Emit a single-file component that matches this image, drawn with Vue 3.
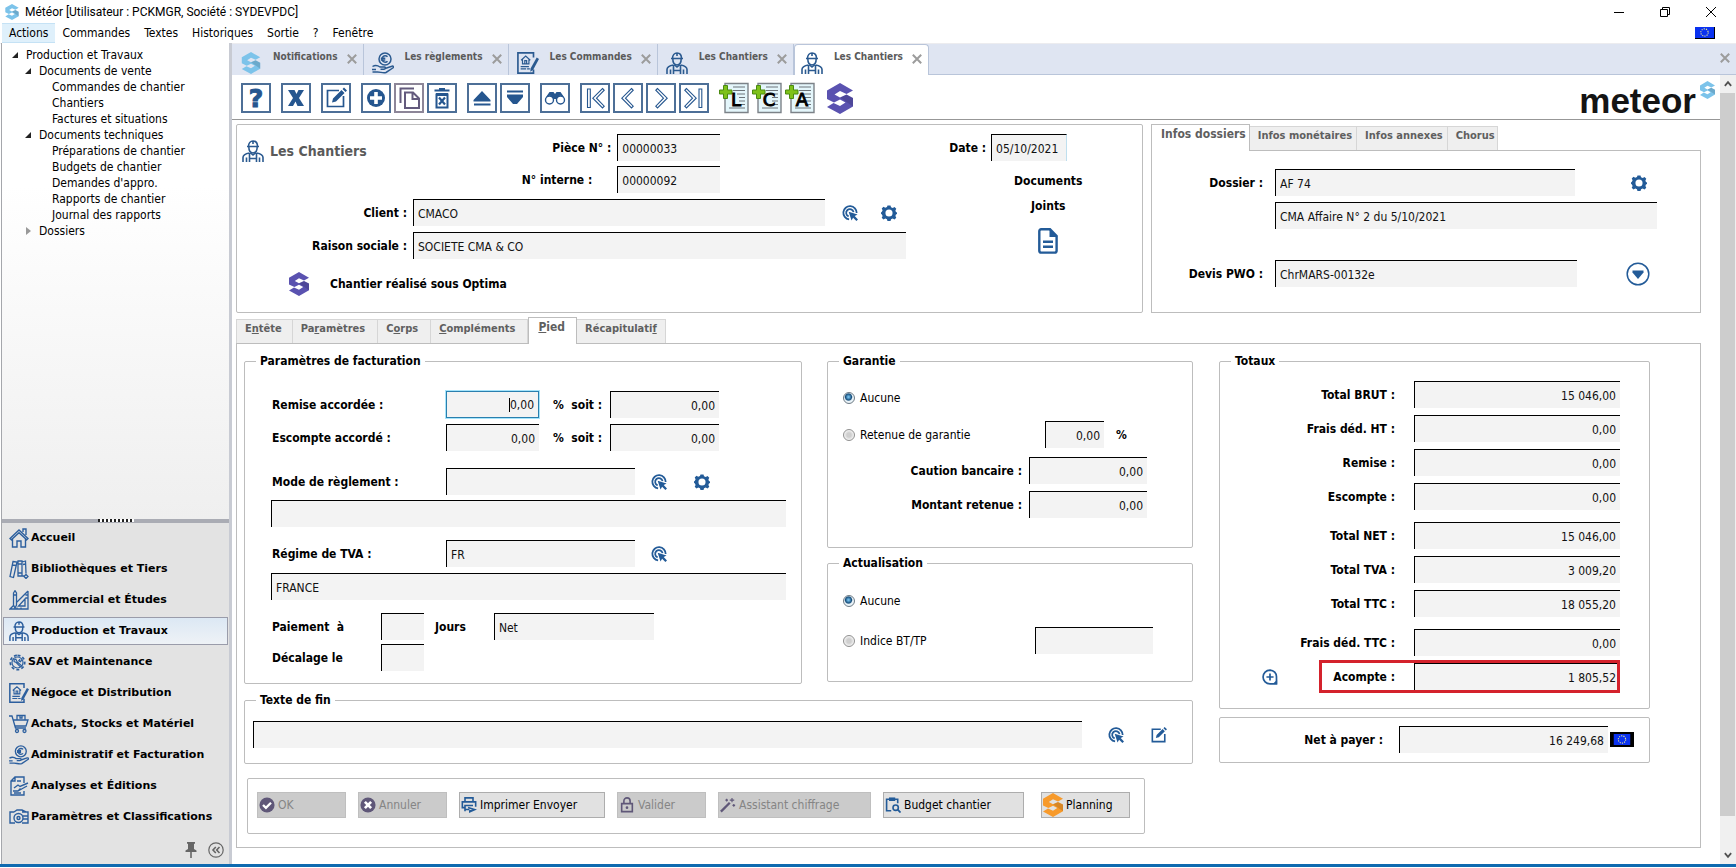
<script setup>
import { ref } from 'vue'

const menus = ['Actions', 'Commandes', 'Textes', 'Historiques', 'Sortie', '?', 'Fenêtre']

const tree = [
  { label: 'Documents de vente', open: true, items: ['Commandes de chantier', 'Chantiers', 'Factures et situations'] },
  {
    label: 'Documents techniques',
    open: true,
    items: ['Préparations de chantier', 'Budgets de chantier', "Demandes d'appro.", 'Rapports de chantier', 'Journal des rapports'],
  },
  { label: 'Dossiers', open: false, items: [] },
]

const modules = [
  { label: 'Accueil', icon: 'home' },
  { label: 'Bibliothèques et Tiers', icon: 'books' },
  { label: 'Commercial et Études', icon: 'rulers' },
  { label: 'Production et Travaux', icon: 'worker', active: true },
  { label: 'SAV et Maintenance', icon: 'service', small: true },
  { label: 'Négoce et Distribution', icon: 'contract' },
  { label: 'Achats, Stocks et Matériel', icon: 'cart' },
  { label: 'Administratif et Facturation', icon: 'hand' },
  { label: 'Analyses et Éditions', icon: 'report' },
  { label: 'Paramètres et Classifications', icon: 'params' },
]

const windows = [
  { label: 'Notifications', icon: 'logo', tone: 'sky' },
  { label: 'Les règlements', icon: 'hand' },
  { label: 'Les Commandes', icon: 'contract' },
  { label: 'Les Chantiers', icon: 'worker' },
  { label: 'Les Chantiers', icon: 'worker', active: true },
]

const tools = [
  [{ icon: 't-help', label: 'Aide' }],
  [{ icon: 't-close', label: 'Fermer' }],
  [{ icon: 't-edit', label: 'Modifier' }],
  [{ icon: 't-add', label: 'Ajouter' }, { icon: 't-copy', label: 'Dupliquer', muted: true }, { icon: 't-trash', label: 'Supprimer' }],
  [{ icon: 't-up', label: 'Monter' }, { icon: 't-down', label: 'Descendre' }],
  [{ icon: 't-find', label: 'Rechercher' }],
  [
    { icon: 't-first', label: 'Premier' },
    { icon: 't-prev', label: 'Précédent' },
    { icon: 't-next', label: 'Suivant' },
    { icon: 't-last', label: 'Dernier' },
  ],
]

const infoTabs = ['Infos dossiers', 'Infos monétaires', 'Infos annexes', 'Chorus']

const pages = [
  { before: 'E', key: 'n', after: 'tête' },
  { before: 'Pa', key: 'r', after: 'amètres' },
  { before: 'C', key: 'o', after: 'rps' },
  { before: '', key: 'C', after: 'ompléments' },
  { before: '', key: 'P', after: 'ied', active: true },
  { before: 'Récapitulati', key: 'f', after: '' },
]

const totals = [
  [
    { id: 'brut', label: 'Total BRUT :', value: '15 046,00' },
    { id: 'fraisht', label: 'Frais déd. HT :', value: '0,00' },
    { id: 'remise', label: 'Remise :', value: '0,00' },
    { id: 'escompte', label: 'Escompte :', value: '0,00' },
  ],
  [
    { id: 'net', label: 'Total NET :', value: '15 046,00' },
    { id: 'tva', label: 'Total TVA :', value: '3 009,20' },
    { id: 'ttc', label: 'Total TTC :', value: '18 055,20' },
  ],
  [
    { id: 'fraisttc', label: 'Frais déd. TTC :', value: '0,00' },
    { id: 'acompte', label: 'Acompte :', value: '1 805,52', marked: true },
  ],
]

const actions = [
  { label: 'OK', icon: 'a-ok', size: 'w-s', disabled: true },
  { label: 'Annuler', icon: 'a-cancel', size: 'w-s', disabled: true },
  { label: 'Imprimer Envoyer', icon: 'a-print', size: 'w-l' },
  { label: 'Valider', icon: 'a-lock', size: 'w-s', disabled: true },
  { label: 'Assistant chiffrage', icon: 'a-wand', size: 'w-xl', disabled: true },
  { label: 'Budget chantier', icon: 'a-budget', size: 'w-m' },
  { label: 'Planning', icon: 'logo', size: 'w-s', tone: 'orange' },
]

const garantie = ref('aucune')
const actualisation = ref('aucune')
</script>

<template>
  <div class="app">
    <svg class="sprite" aria-hidden="true">
      <symbol id="logo" viewBox="0 0 26 31">
        <path fill="currentColor" d="M13 0 26 7.5 19.500 11 13 8 7.500 11.500 13 14.500 19.500 11.500 26 15V23.500L13 31 0 24 6.500 20 13 23 18.500 19.500 13 16.500 7 19.500 0 16V7.500Z" />
        <path fill="#000" opacity=".13" d="M0 7.500 13 14.500 26 23.500V15L19.500 11.500 13 14.500 7.500 11.500Z" />
      </symbol>
      <symbol id="worker" viewBox="0 0 22 22">
        <g fill="none" stroke="currentColor" stroke-width="1.600">
          <path d="M5 6.500H17M6.500 6.500C6.500 3 8.500 1 11 1s4.500 2 4.500 5.500M11 1v3M6.800 6.500c0 4.500 1.700 6.500 4.200 6.500s4.200-2 4.200-6.500" />
          <path d="M1 22v-4.500C1 15 3 13.800 7.500 13M21 22v-4.500c0-2.500-2-3.700-6.500-4.500M4.500 22v-4.500M17.500 22v-4.500M7.500 13v9M14.500 13v9M7.500 18.500h7M8.500 13l2.500 2 2.500-2" />
        </g>
      </symbol>
      <symbol id="hand" viewBox="0 0 22 22">
        <g fill="none" stroke="currentColor" stroke-width="1.500">
          <circle cx="13" cy="7" r="6" />
          <path d="M15.500 4.800a3.200 3.200 0 1 0 0 4.400M8.800 6.300h4.500M8.800 8h4.500" />
          <path d="M.5 14.500c3-2 5.500-1 7.500.500h4.500c1.500.300 1.200 2.200-.500 2.200H8.500M13 16.500l7-2.300c1.500-.400 2 1 .800 1.800L14 20.500c-3 1-6-.800-9-.500H.5M0 17.500h4" />
        </g>
      </symbol>
      <symbol id="contract" viewBox="0 0 24 24">
        <g fill="none" stroke="currentColor" stroke-width="1.800">
          <path d="M18 6V1H1v22h17v-4" />
          <path stroke-width="1.300" d="M4.500 9 9.500 4.500 14.500 9M6 8v5h7V8M8.500 13V9.500h2V13M4 16h9M4 18.500h6M11 18.500h3" />
        </g>
        <path fill="currentColor" d="m21.500 6 2.500 1.500-6.500 12L14.500 21.500l.3-3.500z" />
      </symbol>
      <symbol id="home" viewBox="0 0 20 20">
        <path fill="none" stroke="currentColor" stroke-width="1.400" d="M1 10.500 10 2l9 8.500-1.300 1.200L10 4.700l-7.700 7zM3.500 11v8H8v-6h4v6h4.500v-8M14 4V1h3v6" />
      </symbol>
      <symbol id="books" viewBox="0 0 20 20">
        <path fill="none" stroke="currentColor" stroke-width="1.300" d="M4 2.500 8 3 4.500 18.500 1 17.500zM9 2h4v15H9zM13 3l3.500-1 .5 12.500M13 17h3M9 5h4M9 14h4M3.500 6l3.500.5M14 5.500l2.500-.5M15 17.500l2-2 2 2-2 2z" />
      </symbol>
      <symbol id="rulers" viewBox="0 0 20 20">
        <path fill="none" stroke="currentColor" stroke-width="1.300" d="M4.500 3 6 .700 7.500 3v12L6 18l-1.500-3zM4.500 5h3M19 1v18H1l3.500-3.500M7.500 12.500 19 1M16 9v7H9.500zM16.500 5H19M16.500 8H19M8 19v-1.500M12 19v-1.500" />
      </symbol>
      <symbol id="service" viewBox="0 0 20 20">
        <path fill="none" stroke="currentColor" stroke-width="2" stroke-dasharray="3.500 2.600" d="M10 1.500a8.500 8.500 0 1 1 0 17 8.500 8.500 0 0 1 0-17z" />
        <path fill="none" stroke="currentColor" stroke-width="1.400" d="M10 3.500a6.500 6.500 0 1 1 0 13 6.500 6.500 0 0 1 0-13zM6 7l2-1 1.500 3 5 4.500-1.300 1.300-4.700-4.800L6 9zM13 6l-1.500 2L13.500 9 15 7" />
      </symbol>
      <symbol id="cart" viewBox="0 0 20 20">
        <g fill="none" stroke="currentColor" stroke-width="1.300">
          <path d="M0 2h3l3.500 12H17M4 6h15l-2 6H6M8 6V1.500h8V6M11 1.500V4h2V1.500" />
          <circle cx="8" cy="17" r="1.500" /><circle cx="15.500" cy="17" r="1.500" />
        </g>
      </symbol>
      <symbol id="report" viewBox="0 0 20 20">
        <path fill="none" stroke="currentColor" stroke-width="1.400" d="M15 7V1H6L2 5v14h13v-4M6 1v4H2M5 12l4-3 2 1.500L19 7M4 15h5l2.500-2.500M9 15l9-5M8 5h4M5 17h7" />
      </symbol>
      <symbol id="params" viewBox="0 0 20 20">
        <g fill="none" stroke="currentColor" stroke-width="1.400">
          <path d="M5 5H1v11h5M13 5h6v11h-6M5 5l3-2h5l4 2M14 9h5v3h-5" />
          <circle cx="9.500" cy="11" r="4.500" /><circle cx="9.500" cy="11" r="1.500" />
        </g>
      </symbol>
      <symbol id="target" viewBox="0 0 18 18">
        <g fill="none" stroke="currentColor" stroke-width="2">
          <path d="M16.500 9A7.500 7.500 0 1 0 8 16.200" /><path d="M13 8A4.200 4.200 0 1 0 7.500 12.800" />
        </g>
        <path fill="currentColor" d="m7.500 7.500 10 3.200-3.200 1.800 3.700 3.700-1.800 1.800-3.700-3.700-1.800 3.200z" />
      </symbol>
      <symbol id="gear" viewBox="0 0 18 18">
        <path fill="currentColor" fill-rule="evenodd" d="M7.300.5h3.400l.6 2 1.900.8 2-1 2 2-1 2 .6 1.700 1.700.5v1.400l-1.700.7-.6 1.700 1 2-2 2-2-1-1.900.800-.6 2H7.300l-.6-2-1.900-.8-2 1-2-2 1-2-.8-1.700L0 9.800V8.300l1-.6.800-1.700-1-2 2-2 2 1 1.900-.8zM9 5a4 4 0 1 0 0 8 4 4 0 0 0 0-8z" />
      </symbol>
      <symbol id="edit" viewBox="0 0 18 18">
        <path fill="none" stroke="currentColor" stroke-width="1.800" d="M11 2.500H1.500v14h14V8" />
        <path fill="currentColor" d="M5.500 12.500 6.300 9l6.800-6.800 2.500 2.500L8.800 11.600zM14 1.300 15.300 0 18 2.600l-1.400 1.300z" />
      </symbol>
      <symbol id="page" viewBox="0 0 20 26">
        <path fill="none" stroke="currentColor" stroke-width="2.400" d="M12 1.300H3.200C2 1.300 1.300 2 1.300 3.200v19.500c0 1.200.7 1.900 1.900 1.900h13.500c1.200 0 1.900-.7 1.900-1.900V8z" />
        <path fill="currentColor" d="M11.500 1 19.500 9h-8zM5 12.500h10V15H5zM5 17.500h10V20H5z" />
      </symbol>
      <symbol id="dropdown" viewBox="0 0 24 24">
        <circle cx="12" cy="12" r="10.800" fill="none" stroke="currentColor" stroke-width="1.500" />
        <path fill="currentColor" d="M6.500 8.500h11v2L12 17 6.500 10.500z" />
      </symbol>
      <symbol id="zoomin" viewBox="0 0 18 18">
        <path fill="none" stroke="currentColor" stroke-width="1.900" d="M9 1.200A7.300 7.300 0 1 0 9 16.800h7.300V9A7.500 7.500 0 0 0 9 1.200zM9 5v8M5 9h8" />
        <path fill="currentColor" d="M17 12v5h-5z" />
      </symbol>
      <symbol id="cross" viewBox="0 0 10 10">
        <path stroke="currentColor" stroke-width="2" d="m.8.800 8.400 8.400M9.200.800.8 9.200" />
      </symbol>
      <symbol id="eu" viewBox="0 0 18 12">
        <path fill="#0a32f0" d="M0 0h18v12H0z" />
        <circle cx="9" cy="6" r="4" fill="none" stroke="#f5f08a" stroke-width="1.200" stroke-dasharray="1.200 1.300" />
      </symbol>

      <symbol id="t-help" viewBox="0 0 26 26">
        <text x="13" y="22" text-anchor="middle" font-family="DejaVu Sans" font-weight="700" font-size="25" fill="currentColor" stroke="currentColor">?</text>
      </symbol>
      <symbol id="t-close" viewBox="0 0 26 26">
        <path fill="currentColor" d="M5 5h6.500L13.500 9l2-4H21l-5 8 5 8h-6.500l-2-4.500-2.500 4.500H5l5-8z" />
      </symbol>
      <symbol id="t-edit" viewBox="0 0 26 26">
        <path fill="none" stroke="currentColor" stroke-width="1.700" d="M16 5.500H4.500v16h16V11" />
        <path fill="currentColor" d="m9 17.500 1-4 8.500-8.500 3 3-8.500 8.500zM19.500 4 21 2.500l3 3L22.500 7z" />
      </symbol>
      <symbol id="t-add" viewBox="0 0 26 26">
        <circle cx="13" cy="13" r="9" fill="currentColor" />
        <path stroke="#fff" stroke-width="3.600" d="M13 7v12M7 13h12" />
      </symbol>
      <symbol id="t-copy" viewBox="0 0 26 26">
        <path fill="none" stroke="currentColor" stroke-width="2" d="M4.500 18V3.500H18M9 7.500h8l6 6v9.500H9zM16.500 8v6H23" />
      </symbol>
      <symbol id="t-trash" viewBox="0 0 26 26">
        <path fill="none" stroke="currentColor" stroke-width="2" d="M5.500 5.500h15M10 4h6M7.500 9.500h11v13h-11z" />
        <path fill="currentColor" d="M7 8h12v3H7z" />
        <path stroke="currentColor" stroke-width="2.200" d="m10 12.500 6 7M16 12.500l-6 7" />
      </symbol>
      <symbol id="t-up" viewBox="0 0 26 26">
        <path fill="currentColor" d="m13 6 8.500 9v1.500h-17V15zM5 18.500h16.500v2H5z" />
      </symbol>
      <symbol id="t-down" viewBox="0 0 26 26">
        <path fill="currentColor" d="M5 5.500h16v2H5zM5 9.500h16V12l-6 7h-4l-6-7z" />
      </symbol>
      <symbol id="t-find" viewBox="0 0 26 26">
        <g fill="none" stroke="currentColor" stroke-width="1.400"><circle cx="7.500" cy="15" r="4" /><circle cx="18.500" cy="15" r="4" /></g>
        <path fill="currentColor" d="M4 12 7.500 7h4L13 9l1.500-2h4l3.500 5-4-1.500-3.500 3.500h-3L8 10.500z" />
      </symbol>
      <symbol id="t-first" viewBox="0 0 26 26">
        <path fill="none" stroke="currentColor" stroke-width="1.100" d="M5.500 4h2.800v18.500H5.500zM20.500 3.500l1.700 1.700-7.700 8 7.700 8-1.700 1.700-9.700-9.700z" />
      </symbol>
      <symbol id="t-prev" viewBox="0 0 26 26">
        <path fill="none" stroke="currentColor" stroke-width="1.100" d="m16.500 3.500 1.700 1.700-7.700 8 7.700 8-1.700 1.700-9.700-9.700z" />
      </symbol>
      <symbol id="t-next" viewBox="0 0 26 26">
        <path fill="none" stroke="currentColor" stroke-width="1.100" d="M9.500 3.500 7.800 5.200l7.700 8-7.700 8 1.700 1.700 9.700-9.700z" />
      </symbol>
      <symbol id="t-last" viewBox="0 0 26 26">
        <path fill="none" stroke="currentColor" stroke-width="1.100" d="M18 4h2.800v18.500H18zM5.500 3.500 3.800 5.200l7.700 8-7.700 8 1.700 1.700 9.700-9.700z" />
      </symbol>
      <symbol id="note" viewBox="0 0 30 32">
        <path fill="#e4f6fb" stroke="#7c8288" stroke-width="1.400" d="M6 1.500h23v29H6z" />
        <path stroke="#6d747a" stroke-width="1" d="M14 5h12M14 8.500h12M18 12h8M20 15.500h6M20 19h6M20 22.500h6M10 26h16" />
        <path fill="#7ec11a" stroke="#4a8a10" stroke-width="1" d="M4.500 3.500h4v4.500H13v4H8.500v4.500h-4V12H.5V8h4z" />
      </symbol>

      <symbol id="a-ok" viewBox="0 0 18 18">
        <circle cx="9" cy="9" r="8.500" fill="currentColor" /><path fill="none" stroke="#fff" stroke-width="2.600" d="m4.500 9 3.300 3.300L13.500 6.500" />
      </symbol>
      <symbol id="a-cancel" viewBox="0 0 18 18">
        <circle cx="9" cy="9" r="8.500" fill="currentColor" /><path stroke="#fff" stroke-width="3" d="m5.500 5.500 7 7M12.500 5.500l-7 7" />
      </symbol>
      <symbol id="a-print" viewBox="0 0 18 18">
        <path fill="none" stroke="currentColor" stroke-width="1.800" d="M4.500 5V1h9v4M4 12H1.500V5.500h15V11M4.500 16V9.500h9M4.500 14h5" />
        <path fill="currentColor" d="m8 11 10 3-9 4v-3l4-1-5-1z" />
      </symbol>
      <symbol id="a-lock" viewBox="0 0 18 18">
        <path fill="none" stroke="currentColor" stroke-width="1.800" d="M3 7.500h12v9H3zM5.500 7.500V4.500C5.500 2.500 7 1 9 1s3.500 1.500 3.500 3.500v3" />
        <circle cx="9" cy="12" r="1.500" fill="currentColor" />
      </symbol>
      <symbol id="a-wand" viewBox="0 0 18 18">
        <path stroke="currentColor" stroke-width="2.600" d="M1 16.500 11 6.500" />
        <path stroke="currentColor" stroke-width="1.300" d="M13.500 1v5M11 3.500h5M15.500 8v3M14 9.500h3M7.500 2v3M6 3.500h3" />
      </symbol>
      <symbol id="a-budget" viewBox="0 0 18 18">
        <path fill="none" stroke="currentColor" stroke-width="1.800" d="M7 15.500H1.800v-13h12.500V7" />
        <path fill="currentColor" d="M4.500.5h7v4h-7z" />
        <circle cx="12" cy="12" r="3" fill="none" stroke="currentColor" stroke-width="1.800" /><path stroke="currentColor" stroke-width="2" d="m14 14 3.500 3.500" />
      </symbol>
    </svg>

    <header class="titlebar">
      <svg class="title-logo sky"><use href="#logo" /></svg>
      <h1>Météor [Utilisateur : PCKMGR, Société : SYDEVPDC]</h1>
      <div class="win-controls">
        <button type="button" aria-label="Réduire"><svg viewBox="0 0 10 10"><path stroke="#000" d="M0 5.500h10" /></svg></button>
        <button type="button" aria-label="Restaurer"><svg viewBox="0 0 10 10"><path fill="none" stroke="#000" d="M.5 2.500h7v7h-7zM2.500 2V.500h7v7H8" /></svg></button>
        <button type="button" aria-label="Fermer"><svg viewBox="0 0 10 10"><path stroke="#000" d="m0 0 10 10M10 0 0 10" /></svg></button>
      </div>
    </header>

    <nav class="menubar" aria-label="Menu principal">
      <button v-for="(m, i) in menus" :key="m" type="button" :class="{ hot: i === 0 }">{{ m }}</button>
      <svg class="menu-flag"><use href="#eu" /></svg>
    </nav>

    <div class="body">
      <aside class="sidebar">
        <ul class="tree">
          <li>
            <span class="node"><i class="arrow open"></i>Production et Travaux</span>
            <ul>
              <li v-for="g in tree" :key="g.label">
                <span class="node"><i class="arrow" :class="{ open: g.open }"></i>{{ g.label }}</span>
                <ul v-if="g.items.length">
                  <li v-for="it in g.items" :key="it"><a href="#" class="node leaf">{{ it }}</a></li>
                </ul>
              </li>
            </ul>
          </li>
        </ul>
        <div class="splitter"><span></span></div>
        <nav class="modules" aria-label="Modules">
          <button v-for="m in modules" :key="m.label" type="button" :class="{ active: m.active, small: m.small }">
            <svg><use :href="'#' + m.icon" /></svg>{{ m.label }}
          </button>
        </nav>
        <div class="side-foot">
          <svg viewBox="0 0 12 16" class="pin"><path fill="#666" d="M2 0h8v1.500L9 2v5l2.500 1.500V10H6.800v6H5.200v-6H.5V8.500L3 7V2l-1-.5z" /></svg>
          <svg viewBox="0 0 16 16" class="fold"><g fill="none" stroke="#666" stroke-width="1.200"><circle cx="8" cy="8" r="7.200" /><path stroke-width="1.600" d="M7.800 5 5 8l2.800 3M11.500 5 8.700 8l2.800 3" /></g></svg>
        </div>
      </aside>

      <main class="workspace">
        <div class="windows">
          <div v-for="(w, i) in windows" :key="i" class="win-tab" :class="{ active: w.active }">
            <svg class="win-icon" :class="w.tone"><use :href="'#' + w.icon" /></svg>
            <span>{{ w.label }}</span>
            <button type="button" aria-label="Fermer l'onglet"><svg><use href="#cross" /></svg></button>
          </div>
          <button type="button" class="close-all" aria-label="Fermer tous les onglets"><svg><use href="#cross" /></svg></button>
        </div>

        <div class="view">
          <div class="page">
            <div class="toolbar">
              <div v-for="(g, i) in tools" :key="i" class="tool-group">
                <button v-for="t in g" :key="t.icon" type="button" class="tool" :class="{ muted: t.muted }" :aria-label="t.label">
                  <svg><use :href="'#' + t.icon" /></svg>
                </button>
              </div>
              <div class="tool-group notes">
                <button v-for="l in ['L', 'C', 'A']" :key="l" type="button" class="note">
                  <svg viewBox="0 0 30 32">
                    <use href="#note" />
                    <text x="17" y="24" text-anchor="middle" class="note-letter">{{ l }}</text>
                  </svg>
                </button>
              </div>
              <button type="button" class="optima" aria-label="Optima"><svg class="violet"><use href="#logo" /></svg></button>
              <div class="brand"><span>meteor</span><svg class="sky"><use href="#logo" /></svg></div>
            </div>

            <div class="head">
              <section class="panel ident">
                <div class="ident-main">
                  <div class="ident-top">
                    <h2><svg><use href="#worker" /></svg>Les Chantiers</h2>
                    <div class="ids">
                      <label for="piece">Pièce N° :</label><input id="piece" value="00000033" />
                      <label for="interne" class="early">N° interne :</label><input id="interne" value="00000092" />
                    </div>
                  </div>
                  <div class="row">
                    <label for="client">Client :</label><input id="client" value="CMACO" />
                    <button type="button" class="ico first" aria-label="Choisir le client"><svg><use href="#target" /></svg></button>
                    <button type="button" class="ico" aria-label="Paramètres du client"><svg><use href="#gear" /></svg></button>
                  </div>
                  <div class="row">
                    <label for="raison">Raison sociale :</label><input id="raison" value="SOCIETE CMA &amp; CO" />
                  </div>
                  <div class="optima-note"><svg class="violet"><use href="#logo" /></svg><b>Chantier réalisé sous Optima</b></div>
                </div>
                <div class="ident-side">
                  <div class="date-row"><label for="date">Date :</label><input id="date" value="05/10/2021" /></div>
                  <div class="docs">
                    <b>Documents</b><b>Joints</b>
                    <button type="button" aria-label="Documents joints"><svg><use href="#page" /></svg></button>
                  </div>
                </div>
              </section>

              <section class="tabbed">
                <div class="tabs tight" role="tablist">
                  <button v-for="(t, i) in infoTabs" :key="t" type="button" role="tab" :class="{ active: i === 0 }">{{ t }}</button>
                </div>
                <div class="tab-body infos">
                  <div class="info-row">
                    <label for="dossier">Dossier :</label><input id="dossier" value="AF 74" />
                    <button type="button" class="ico" aria-label="Paramètres du dossier"><svg><use href="#gear" /></svg></button>
                  </div>
                  <div class="info-row"><span></span><input aria-label="Libellé du dossier" value="CMA Affaire N° 2 du 5/10/2021" /></div>
                  <div class="info-row devis">
                    <label for="devis">Devis PWO :</label><input id="devis" value="ChrMARS-00132e" />
                    <button type="button" class="ico big" aria-label="Ouvrir le devis"><svg><use href="#dropdown" /></svg></button>
                  </div>
                </div>
              </section>
            </div>

            <section class="tabbed lower">
              <div class="tabs" role="tablist">
                <button v-for="p in pages" :key="p.before + p.key" type="button" role="tab" :class="{ active: p.active }">{{ p.before }}<u>{{ p.key }}</u>{{ p.after }}</button>
              </div>
              <div class="tab-body foot">
                <div class="left">
                  <div class="pair">
                    <fieldset class="billing">
                      <legend>Paramètres de facturation</legend>
                      <div class="row">
                        <label for="rem">Remise accordée :</label>
                        <span class="focus"><input id="rem" class="num" value="0,00" /><i></i></span>
                        <label for="rems" class="soit">% &nbsp;soit :</label><input id="rems" class="num amount" value="0,00" />
                      </div>
                      <div class="row g6">
                        <label for="esc">Escompte accordé :</label><input id="esc" class="num rate" value="0,00" />
                        <label for="escs" class="soit">% &nbsp;soit :</label><input id="escs" class="num amount" value="0,00" />
                      </div>
                      <div class="row g17">
                        <label for="mode">Mode de règlement :</label><input id="mode" class="code" value="" />
                        <button type="button" class="ico" aria-label="Choisir le mode"><svg><use href="#target" /></svg></button>
                        <button type="button" class="ico next" aria-label="Paramètres du mode"><svg><use href="#gear" /></svg></button>
                      </div>
                      <div class="row g5"><input class="full" aria-label="Libellé du mode de règlement" value="" /></div>
                      <div class="row g13">
                        <label for="tvar">Régime de TVA :</label><input id="tvar" class="code" value="FR" />
                        <button type="button" class="ico" aria-label="Choisir le régime"><svg><use href="#target" /></svg></button>
                      </div>
                      <div class="row g6"><input class="full" aria-label="Libellé du régime" value="FRANCE" /></div>
                      <div class="row g13 short">
                        <label for="paie">Paiement &nbsp;à</label><input id="paie" class="days" value="" />
                        <label for="jours" class="jours">Jours</label><input id="jours" class="term" value="Net" />
                      </div>
                      <div class="row g4 short"><label for="decal">Décalage le</label><input id="decal" class="days" value="" /></div>
                    </fieldset>

                    <div class="stack">
                      <fieldset class="garantie">
                        <legend>Garantie</legend>
                        <div class="row"><label class="radio"><input v-model="garantie" type="radio" name="garantie" value="aucune" />Aucune</label></div>
                        <div class="row g10">
                          <label class="radio"><input v-model="garantie" type="radio" name="garantie" value="retenue" />Retenue de garantie</label>
                          <input class="num pct" aria-label="Taux de retenue" value="0,00" /><b class="percent">%</b>
                        </div>
                        <div class="row g9 end"><label for="caution">Caution bancaire :</label><input id="caution" class="num sum" value="0,00" /></div>
                        <div class="row g7 end"><label for="montant">Montant retenue :</label><input id="montant" class="num sum" value="0,00" /></div>
                      </fieldset>
                      <fieldset class="actual">
                        <legend>Actualisation</legend>
                        <div class="row"><label class="radio"><input v-model="actualisation" type="radio" name="actualisation" value="aucune" />Aucune</label></div>
                        <div class="row g13">
                          <label class="radio"><input v-model="actualisation" type="radio" name="actualisation" value="indice" />Indice BT/TP</label>
                          <input class="sum" aria-label="Indice" value="" />
                        </div>
                      </fieldset>
                    </div>
                  </div>

                  <fieldset class="ending">
                    <legend>Texte de fin</legend>
                    <div class="row">
                      <input class="full" aria-label="Texte de fin" value="" />
                      <button type="button" class="ico" aria-label="Choisir un texte"><svg><use href="#target" /></svg></button>
                      <button type="button" class="ico next" aria-label="Modifier le texte"><svg><use href="#edit" /></svg></button>
                    </div>
                  </fieldset>

                  <div class="panel actions">
                    <button v-for="a in actions" :key="a.label" type="button" :class="a.size" :disabled="a.disabled">
                      <svg :class="a.tone"><use :href="'#' + a.icon" /></svg>{{ a.label }}
                    </button>
                  </div>
                </div>

                <div class="right">
                  <fieldset class="totals">
                    <legend>Totaux</legend>
                    <div v-for="(g, i) in totals" :key="i" class="total-group">
                      <div v-for="t in g" :key="t.id" class="total" :class="{ marked: t.marked }">
                        <button v-if="t.marked" type="button" class="ico" aria-label="Détail des acomptes"><svg><use href="#zoomin" /></svg></button>
                        <label :for="t.id">{{ t.label }}</label><input :id="t.id" class="num" :value="t.value" />
                      </div>
                    </div>
                  </fieldset>
                  <div class="panel net">
                    <label for="apayer">Net à payer :</label><input id="apayer" class="num" value="16 249,68" />
                    <svg class="net-flag"><use href="#eu" /></svg>
                  </div>
                </div>
              </div>
            </section>
          </div>

          <div class="scroll" aria-hidden="true">
            <svg viewBox="0 0 16 20"><path fill="none" stroke="#505050" stroke-width="2" d="m4.500 12 3.500-4 3.500 4" /></svg>
            <div class="track"><div class="thumb"></div></div>
            <svg viewBox="0 0 16 20"><path fill="none" stroke="#505050" stroke-width="2" d="m4.500 8 3.500 4 3.500-4" /></svg>
          </div>
        </div>
      </main>
    </div>
    <div class="baseline"></div>
  </div>
</template>

<style>
body { background: #fff; }
</style>

<style scoped>
* { box-sizing: border-box; }
.app {
  display: flex;
  flex-direction: column;
  min-height: 100vh;
  min-width: 1500px;
  background: #fff;
  color: #000;
  font: 12px/16px "DejaVu Sans Condensed", "DejaVu Sans", sans-serif;
}
.sprite { position: absolute; width: 0; height: 0; }
svg { display: block; flex: none; overflow: visible; }
button { font: inherit; color: inherit; background: none; border: 0; padding: 0; margin: 0; }
ul { list-style: none; margin: 0; padding: 0; }
h1, h2 { margin: 0; font-size: inherit; font-weight: inherit; }
a { color: inherit; text-decoration: none; }
.sky { color: #7cc3ea; }
.violet { color: #5a52b0; }
.orange { color: #f79a2b; }

input {
  height: 27px;
  min-width: 0;
  border: 0;
  border-top: 1px solid #000;
  border-left: 1px solid #000;
  border-radius: 0;
  background: #f3f3f3;
  padding: 1px 4px 0;
  font: inherit;
  color: #111;
  outline: 0;
}
.num { text-align: right; }
label, legend, b { font-weight: 700; white-space: nowrap; }
label { padding-top: 1px; }

.titlebar { display: flex; align-items: center; height: 23px; padding: 0 20px 0 5px; gap: 6px; }
.title-logo { width: 14px; height: 16px; }
.titlebar h1 { font-family: Roboto, sans-serif; font-size: 12px; }
.win-controls { margin-left: auto; display: flex; gap: 36px; }
.win-controls svg { width: 10px; height: 10px; }

.menubar { display: flex; align-items: center; height: 20px; padding: 0 21px 0 2px; }
.menubar button { height: 20px; padding: 0 7px; border: 1px solid transparent; border-width: 1px 0; }
.menubar .hot { background: #dff0fb; border-color: #c5e2f5; }
.menu-flag { margin-left: auto; width: 20px; height: 12px; background: #0a32f0; border: solid #000; border-width: 0 1px 1px 0; }

.body { flex: 1; display: flex; border-top: 1px solid #ececef; }
.baseline { height: 3px; margin-bottom: 1px; background: #0f6ab0; }

.sidebar {
  flex: none;
  width: 231px;
  display: flex;
  flex-direction: column;
  margin: -1px 0 0 1px;
  border-left: 1px solid #a5a7ac;
  border-right: 3px solid #c8cbd3;
  background: #fff;
}
.tree { flex: 1; padding: 4px 0 0 9px; background: linear-gradient(#fff 30%, #efefef); }
.tree ul { padding-left: 13px; }
.node { display: flex; align-items: center; height: 16px; white-space: nowrap; }
.leaf { padding-left: 15px; }
.arrow { width: 15px; height: 16px; display: flex; align-items: center; }
.arrow::before { content: ""; border: 4px solid transparent; border-left: 5px solid #999; border-right: 0; margin-left: 2px; }
.arrow.open::before { border: 0; border-left: 6px solid transparent; border-bottom: 6px solid #222; margin-left: 1px; }
.splitter { height: 4px; background: #aaacb4; display: flex; justify-content: center; }
.splitter span { width: 36px; height: 3px; background: repeating-linear-gradient(90deg, #222 0 2px, #fff 2px 4px); }
.modules { background: #e3e3e3; display: flex; flex-direction: column; gap: 3px; padding: 1px 1px 0; }
.modules button {
  display: flex;
  align-items: center;
  gap: 2px;
  height: 28px;
  padding: 0 5px;
  border: 1px solid transparent;
  font: 700 11px/16px "DejaVu Sans", sans-serif;
  white-space: nowrap;
}
.modules .active { background: linear-gradient(#dce8f4, #eef2f6); border-color: #9a9caa; }
.modules svg { width: 20px; height: 20px; color: #2c5f9e; }
.modules .small svg { width: 17px; height: 17px; }
.side-foot { display: flex; justify-content: flex-end; align-items: center; gap: 11px; height: 33px; padding: 5px 5px 0; background: #e3e3e3; }
.pin { width: 12px; height: 16px; }
.fold { width: 16px; height: 16px; }

.workspace { flex: 1; min-width: 0; display: flex; flex-direction: column; }
.windows { display: flex; height: 31px; background: #dfe5f2; border-bottom: 1px solid #b9c5da; color: #5a5a5a; }
.win-tab {
  display: flex;
  align-items: flex-start;
  height: 31px;
  padding: 1px 6px 0 8px;
  border-right: 1px solid #b9c5da;
  font-size: 10px;
  font-weight: 700;
  line-height: 24px;
  color: #5a5a5a;
  background: #dfe5f2;
}
.win-tab span { margin: 0 9px 0 11px; white-space: nowrap; }
.win-tab.active { background: #fff; border: 1px solid #b9c5da; border-bottom: 0; border-radius: 4px 4px 0 0; padding: 0 6px; }
.win-icon { width: 22px; height: 22px; margin-top: 7px; color: #2b5a90; }
.win-icon.sky { color: #7cc3ea; }
.win-tab button svg, .close-all svg { width: 10px; height: 10px; color: #9c9c9c; }
.win-tab button { margin-top: 9px; height: 10px; }
.close-all { margin: 0 6px 0 auto; height: 28px; display: flex; align-items: center; }

.view { flex: 1; display: flex; }
.page { flex: 1; min-width: 0; padding-bottom: 15px; }
.scroll { flex: none; width: 16px; display: flex; flex-direction: column; background: #f0f0f0; }
.scroll svg { width: 16px; height: 18px; }
.track { flex: 1; }
.thumb { height: 96%; background: #cdcdcd; margin-right: 1px; }

.toolbar { display: flex; align-items: center; gap: 10px; height: 45px; padding: 2px 5px 0 9px; border-bottom: 1px solid #979797; }
.tool-group { display: flex; gap: 3px; }
.tool { width: 30px; height: 30px; border: 2px solid #4d6f97; color: #25568f; }
.tool svg { width: 26px; height: 26px; }
.tool.muted { border-color: #8d8698; color: #635a7d; }
.note svg { width: 30px; height: 32px; }
.note-letter { font: 18px "DejaVu Sans", sans-serif; fill: #000; stroke: #000; }
.optima svg { width: 26px; height: 31px; margin-left: 2px; }
.brand { margin-left: auto; display: flex; align-items: flex-start; gap: 4px; height: 34px; color: #141414; }
.brand span { font: 700 35px/40px "Liberation Sans", Arial, sans-serif; }
.brand svg { width: 15px; height: 18px; }

.panel { border: 1px solid #bdbdbd; border-radius: 2px; }
.head { display: grid; grid-template-columns: 907fr 550fr; gap: 8px; padding: 4px 19px 0 4px; }
.ident { display: flex; padding: 9px 0 15px; }
.ident-main { flex: 670 1 0; min-width: 0; }
.ident-side { flex: 236 1 0; }
.ident-top { display: flex; justify-content: space-between; padding-right: 186px; margin-bottom: 6px; }
h2 { display: flex; align-items: center; gap: 6px; height: 34px; padding-left: 5px; font-size: 14px; font-weight: 700; color: #5a5a5a; }
h2 svg { width: 22px; height: 22px; color: #2b5a90; }
.ids { display: grid; grid-template-columns: auto 103px; gap: 5px 6px; align-items: center; text-align: right; }
.ids .early { padding-right: 19px; }
.ident .row { display: flex; align-items: center; margin-bottom: 6px; }
.ident .row label { width: 170px; text-align: right; margin-right: 6px; }
.ident .row input { flex: 1; }
.ico { flex: none; width: 16px; height: 16px; color: #235b98; }
.ico svg { width: 16px; height: 16px; }
.ident .row .ico { margin-right: 9px; margin-left: 14px; }
.ident .row .ico.first { margin-left: 17px; }
.optima-note { display: flex; align-items: center; gap: 21px; padding: 7px 0 0 52px; }
.optima-note svg { width: 20px; height: 24px; }
.date-row { display: flex; align-items: center; gap: 5px; padding-left: 43px; }
.date-row input { width: 76px; border-right: 1px solid #bfdfee; }
.docs { width: 114px; margin-left: 85px; display: flex; flex-direction: column; align-items: center; gap: 9px; padding-top: 12px; }
.docs svg { width: 20px; height: 26px; color: #235b98; }
.docs button { margin-top: 5px; }

.tabs { display: flex; align-items: flex-end; color: #5f5f5f; }
.tabs button {
  height: 24px;
  padding: 0 12px 6px 8px;
  border: 1px solid #d6d6d6;
  border-width: 1px 1px 0 0;
  background: #efefef;
  font-size: 11px;
  font-weight: 700;
  white-space: nowrap;
}
.tabs button:first-child { border-left-width: 1px; padding-right: 10px; }
.tabs button:last-child { padding-right: 8px; }
.tabs .active {
  height: 27px;
  margin-bottom: -1px;
  padding: 0 11px 8px 9px;
  border: 1px solid #bdbdbd;
  border-bottom: 0;
  background: #fff;
  font-size: 12px;
}
.tabs.tight button { padding: 0 4px 6px 8px; }
.tabs.tight button:last-child { padding-right: 2px; }
.tabs.tight .active { padding: 0 3px 8px 9px; }
.tab-body { border: 1px solid #bdbdbd; }
.infos { padding: 18px 43px 25px 0; display: flex; flex-direction: column; gap: 6px; }
.info-row { display: flex; align-items: center; }
.info-row > :first-child { width: 111px; margin-right: 12px; text-align: right; }
.info-row input { flex: 1; }
.info-row .ico { margin: 0 10px 0 56px; }
.info-row .big { width: 24px; height: 24px; margin: 0 7px 0 49px; }
.info-row .big svg { width: 24px; height: 24px; }
.info-row.devis { margin-top: 25px; }

.lower { padding: 4px 19px 0 4px; }
.foot { display: grid; grid-template-columns: 949fr 431fr; gap: 26px; padding: 9px 50px 13px 7px; }
.left, .right, .stack { min-width: 0; }
.pair { display: grid; grid-template-columns: 558fr 366fr; gap: 25px; }
fieldset { margin: 0; min-width: 0; padding: 0; border: 1px solid #bdbdbd; border-radius: 2px; }
legend { margin-left: 11px; padding: 0 4px; height: 16px; }
fieldset .row { display: flex; align-items: center; }
.g4 { margin-top: 4px; }
.g5 { margin-top: 5px; }
.g6 { margin-top: 6px; }
.g7 { margin-top: 7px; }
.g9 { margin-top: 9px; }
.g10 { margin-top: 10px; }
.g13 { margin-top: 13px; }
.g17 { margin-top: 17px; }
.full { flex: 1; }

.billing { padding-bottom: 12px; }
.billing .row { padding: 0 15px 0 26px; }
.billing .row > label:first-child { width: 175px; padding-left: 1px; }
.billing legend + .row { margin-top: 22px; }
.billing .row.short > label:first-child { width: 110px; }
.focus { position: relative; display: flex; width: 93px; }
.focus input { width: 93px; border: 1px solid #2a7fae; box-shadow: 0 0 0 1px #a5e4fb; }
.focus i { position: absolute; right: 29px; top: 7px; width: 1px; height: 14px; background: #000; }
.rate { width: 93px; }
.billing .row > .soit { margin: 0 4px 0 14px; width: 53px; }
.amount { width: 109px; }
.code { width: 189px; }
.code + .ico { margin-left: 16px; }
.next { margin-left: 27px; }
.days { width: 43px; }
.jours { margin: 0 28px 0 11px; }
.term { width: 160px; }

.garantie .row, .actual .row { min-height: 27px; padding: 0 45px 0 15px; }
.garantie { padding-bottom: 29px; margin-bottom: 7px; }
.garantie legend + .row { margin-top: 15px; }
.actual { padding-bottom: 27px; }
.actual legend + .row { margin-top: 16px; }
.radio { display: flex; align-items: center; gap: 5px; padding: 0; font-weight: 400; }
.radio input {
  appearance: none;
  width: 12px;
  height: 12px;
  margin: 0;
  padding: 0;
  border: 1px solid #8f8f8f;
  border-radius: 50%;
  background: radial-gradient(circle, #cfcfcf 0 30%, #f4f4f4 70%);
}
.radio input:checked { background: radial-gradient(circle at 45% 40%, #6fb9e6 0 8%, #164e7c 38%, #eaf3f8 52%); border-color: #6e7b85; }
.pct { width: 59px; margin-left: auto; }
.percent { width: 43px; padding-left: 12px; }
.end { justify-content: flex-end; }
.end label { margin-right: 7px; }
.sum { width: 118px; }
.actual .sum { margin-left: auto; }
.actual .row { padding-right: 39px; }

.ending { margin-top: 8px; padding-bottom: 15px; }
.ending .row { padding: 0 25px 0 8px; margin-top: 13px; }
.ending .full + .ico { margin-left: 26px; }

.actions { display: flex; gap: 12px; width: 898px; margin: 14px 0 0 3px; padding: 13px 14px 15px 9px; }
.actions button { display: flex; align-items: center; gap: 3px; height: 26px; padding: 0 1px; background: #e1e1e1; border: 1px solid #adadad; white-space: nowrap; }
.actions button:last-child { margin-left: auto; }
.actions svg { width: 16px; height: 16px; color: #235b98; }
.actions svg.orange { width: 20px; height: 24px; color: #f79a2b; }
.actions button:disabled { background: #cbcbcb; border-color: #bfbfbf; color: #858585; }
.actions button:disabled svg { color: #5f5778; }
.w-s { width: 89px; }
.w-m { width: 141px; }
.w-l { width: 146px; }
.w-xl { width: 153px; }

.totals { padding-bottom: 18px; margin-bottom: 8px; }
.total-group { margin-top: 12px; display: flex; flex-direction: column; gap: 7px; }
.total { position: relative; display: flex; align-items: center; justify-content: flex-end; padding-right: 29px; }
.total label { margin-right: 19px; }
.total input { width: 206px; }
.total .ico { margin: 0 auto 0 42px; }
.marked::after { content: ""; position: absolute; inset: -3px 29px -3px 99px; border: 3px solid #d4222c; pointer-events: none; }
.net { display: flex; align-items: center; justify-content: flex-end; padding: 8px 15px 9px; }
.net label { margin-right: 16px; }
.net input { width: 209px; }
.net-flag { width: 24px; height: 15px; margin-left: 2px; border: 2px solid #000; background: #000; }
</style>
